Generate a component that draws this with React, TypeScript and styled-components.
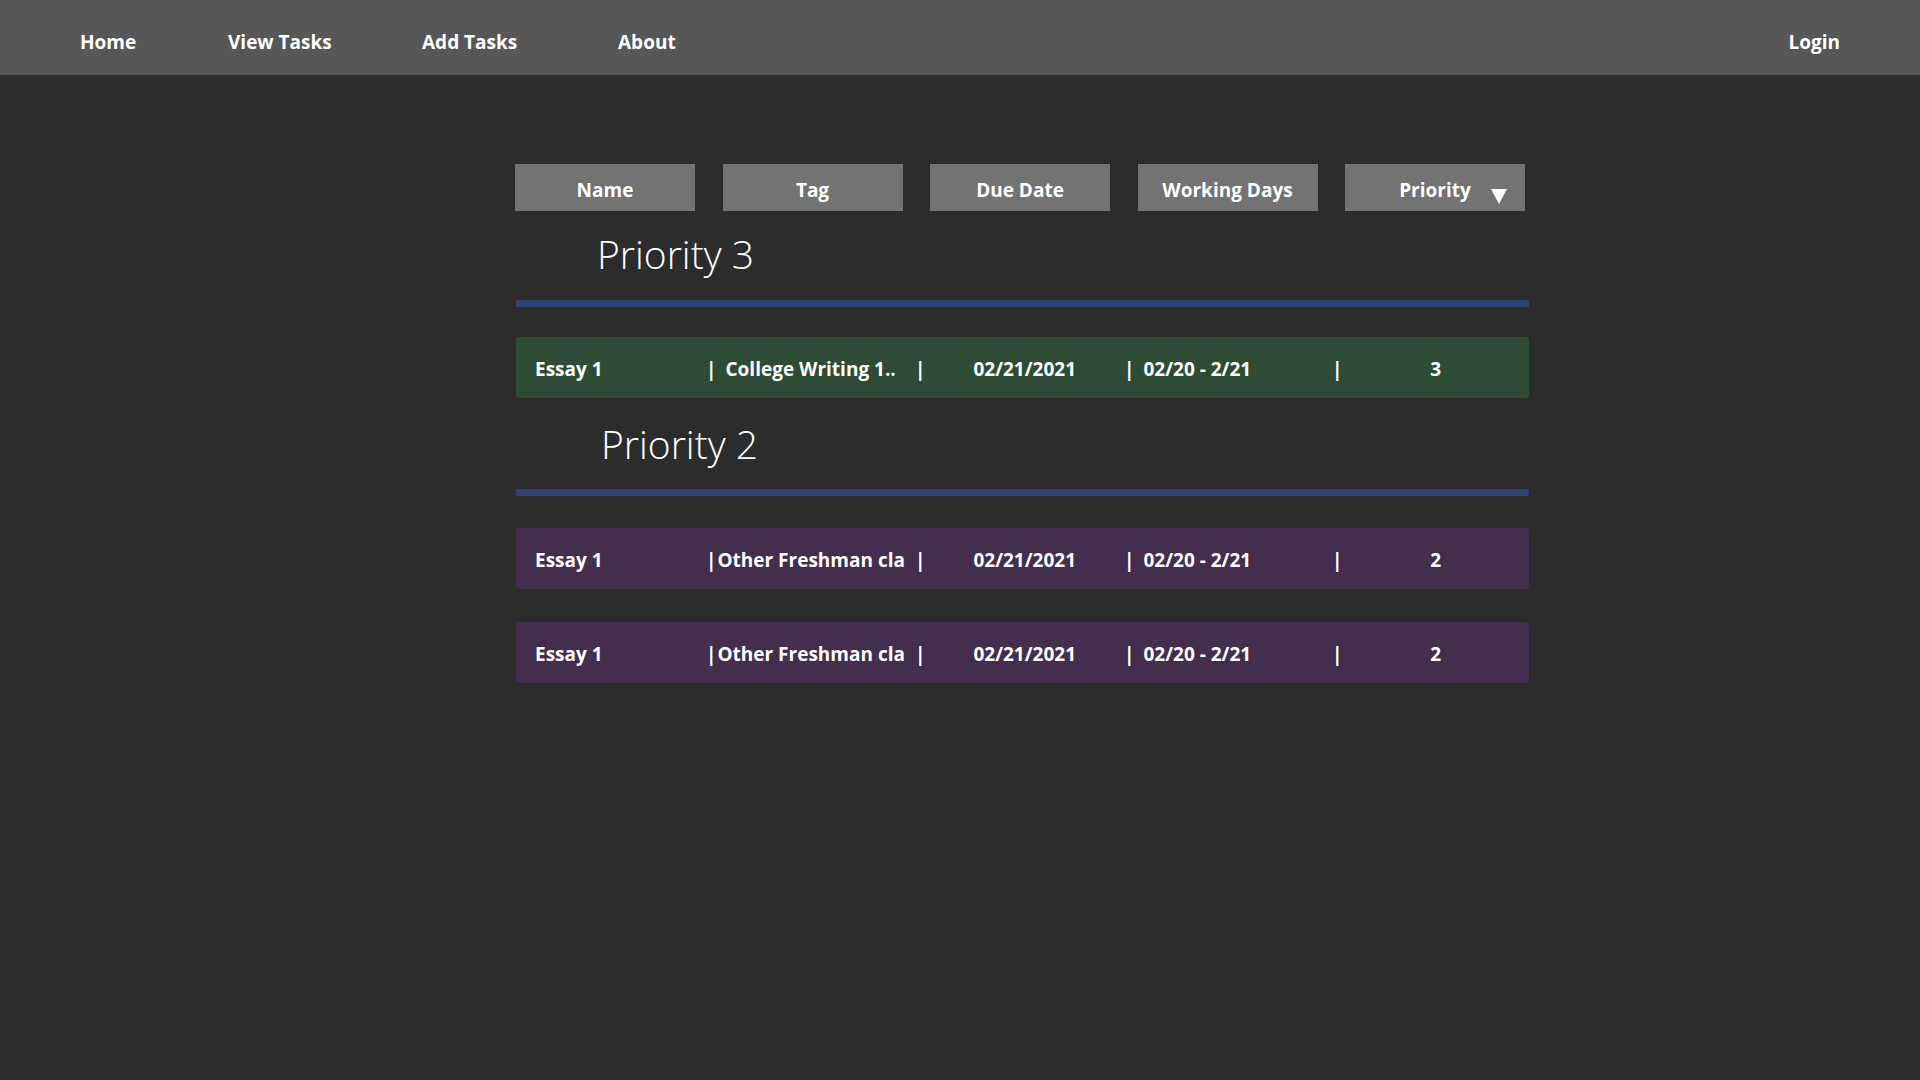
import React from 'react';
import styled, { createGlobalStyle } from 'styled-components';

const GlobalStyle = createGlobalStyle`
  html, body {
    margin: 0;
    padding: 0;
    background: #2c2c2c;
    font-family: "Open Sans", "Noto Sans", Arial, sans-serif;
    color: #ffffff;
  }
  #root {
    min-height: 100vh;
  }
`;

const Page = styled.div`
  min-height: 100vh;
  background: #2c2c2c;
`;

const NavBar = styled.nav`
  height: 75px;
  box-sizing: border-box;
  padding: 8px 80px 0 80px;
  background: #575757;
  display: flex;
  align-items: center;
  justify-content: space-between;
`;

const NavLinks = styled.div`
  display: grid;
  grid-template-columns: 148px 194px 196px auto;
`;

const NavLink = styled.a`
  color: #ffffff;
  font-size: 19px;
  font-weight: 700;
  text-decoration: none;
  cursor: pointer;
`;

const Main = styled.main`
  width: 1014px;
  margin-left: 515px;
  padding-top: 89px;
`;

const SortBar = styled.div`
  width: 1010px;
  display: flex;
  justify-content: space-between;
`;

const SortButton = styled.button<{ $sorted?: boolean }>`
  position: relative;
  width: 180px;
  height: 47px;
  box-sizing: border-box;
  padding: 4px 0 0 0;
  border: none;
  background: #737373;
  color: #ffffff;
  font-family: inherit;
  font-size: 19px;
  font-weight: 700;
  cursor: pointer;

  ${({ $sorted }) =>
    $sorted &&
    `
    &::after {
      content: '';
      position: absolute;
      right: 18px;
      top: 25px;
      width: 0;
      height: 0;
      border-left: 8.5px solid transparent;
      border-right: 8.5px solid transparent;
      border-top: 15px solid #ffffff;
    }
  `}
`;

const Section = styled.section<{ $first?: boolean }>`
  margin-top: ${({ $first }) => ($first ? '19px' : '22px')};
`;

const GroupTitle = styled.h2<{ $indent: number }>`
  margin: 0;
  padding-left: ${({ $indent }) => $indent}px;
  font-size: 39px;
  line-height: 48px;
  font-weight: 300;
  color: #ffffff;
`;

const Divider = styled.div<{ $gap: number }>`
  margin: ${({ $gap }) => $gap}px 0 0 1px;
  height: 7px;
  background: #2f4373;
  border-radius: 1px;
`;

const TaskList = styled.div<{ $gap: number }>`
  margin-top: ${({ $gap }) => $gap}px;
  display: flex;
  flex-direction: column;
  gap: 33px;
`;

const TaskRow = styled.div<{ $priority: number }>`
  margin-left: 1px;
  height: 61px;
  box-sizing: border-box;
  padding: 3px 0 0 19px;
  border-radius: 3px;
  background: ${({ $priority }) => ($priority === 3 ? '#2e4c35' : '#432e4d')};
  display: grid;
  grid-template-columns: 171px 209px 209px 208px 1fr;
  align-items: center;
  font-size: 19px;
  font-weight: 700;
  color: #ffffff;
  white-space: nowrap;
`;

const Cell = styled.div`
  display: flex;
  align-items: center;
  overflow: hidden;
`;

const Sep = styled.span<{ $gap?: number }>`
  margin-right: ${({ $gap }) => $gap ?? 0}px;
`;

const Value = styled.span`
  flex: 1;
  text-align: center;
`;

type Task = {
  name: string;
  tag: string;
  due: string;
  days: string;
  priority: number;
};

const groups: { priority: number; indent: number; lineGap: number; listGap: number; tasks: Task[] }[] = [
  {
    priority: 3,
    indent: 82,
    lineGap: 22,
    listGap: 30,
    tasks: [{ name: 'Essay 1', tag: 'College Writing 1..', due: '02/21/2021', days: '02/20 - 2/21', priority: 3 }],
  },
  {
    priority: 2,
    indent: 86,
    lineGap: 21,
    listGap: 32,
    tasks: [
      { name: 'Essay 1', tag: 'Other Freshman cla', due: '02/21/2021', days: '02/20 - 2/21', priority: 2 },
      { name: 'Essay 1', tag: 'Other Freshman cla', due: '02/21/2021', days: '02/20 - 2/21', priority: 2 },
    ],
  },
];

const TaskItem: React.FC<{ task: Task }> = ({ task }) => (
  <TaskRow $priority={task.priority}>
    <Cell>{task.name}</Cell>
    <Cell>
      <Sep $gap={task.priority === 3 ? 9 : 1}>|</Sep>
      {task.tag}
    </Cell>
    <Cell>
      <Sep>|</Sep>
      <Value>{task.due}</Value>
    </Cell>
    <Cell>
      <Sep $gap={9}>|</Sep>
      {task.days}
    </Cell>
    <Cell>
      <Sep>|</Sep>
      <Value>{task.priority}</Value>
    </Cell>
  </TaskRow>
);

export default function App() {
  return (
    <Page>
      <GlobalStyle />
      <NavBar>
        <NavLinks>
          <NavLink>Home</NavLink>
          <NavLink>View Tasks</NavLink>
          <NavLink>Add Tasks</NavLink>
          <NavLink>About</NavLink>
        </NavLinks>
        <NavLink>Login</NavLink>
      </NavBar>
      <Main>
        <SortBar>
          <SortButton>Name</SortButton>
          <SortButton>Tag</SortButton>
          <SortButton>Due Date</SortButton>
          <SortButton>Working Days</SortButton>
          <SortButton $sorted>Priority</SortButton>
        </SortBar>
        {groups.map((g, i) => (
          <Section key={g.priority} $first={i === 0}>
            <GroupTitle $indent={g.indent}>Priority {g.priority}</GroupTitle>
            <Divider $gap={g.lineGap} />
            <TaskList $gap={g.listGap}>
              {g.tasks.map((t, j) => (
                <TaskItem key={j} task={t} />
              ))}
            </TaskList>
          </Section>
        ))}
      </Main>
    </Page>
  );
}
